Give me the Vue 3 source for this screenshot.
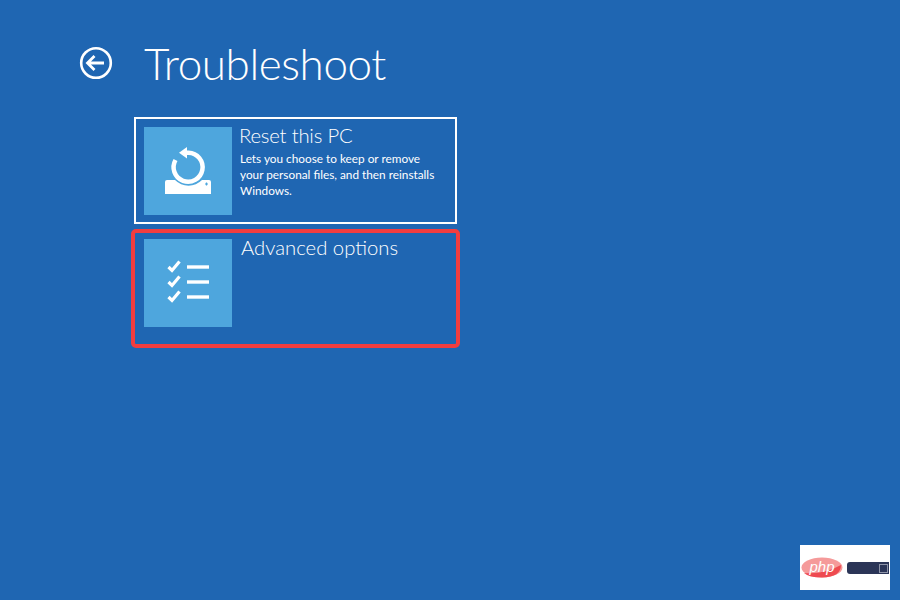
<template>
  <div class="screen">
    <header class="head">
      <svg class="back" width="34" height="34" viewBox="0 0 34 34" fill="none" stroke="#fff">
        <circle cx="17" cy="17" r="14.800" stroke-width="2.600" />
        <path d="M8.500 17H25M15.500 10 8.500 17l7 7" stroke-width="2.800" />
      </svg>
      <h1 class="title">Troubleshoot</h1>
    </header>

    <div class="cards">
      <section class="card selected">
        <div class="tile">
          <svg width="88" height="88" viewBox="0 0 88 88">
            <path d="M21 55Q21 53 23 53H31A19 19 0 0 0 58 53H65Q67 53 67 55V67H21Z" fill="#fff" />
            <path d="M61 57h3M62.500 55.500v3" stroke="#4ea6dd" stroke-width="1.200" />
            <path d="M40 25.700H44.500A14.500 14.500 0 1 1 31.500 33" fill="none" stroke="#fff" stroke-width="4.500" />
            <path d="M43 20V31.500L35 25.700Z" fill="#fff" />
          </svg>
        </div>
        <div class="text">
          <h2 class="name first">Reset this PC</h2>
          <p class="desc">Lets you choose to keep or remove<br />your personal files, and then reinstalls<br />Windows.</p>
        </div>
      </section>

      <section class="card flagged">
        <div class="tile">
          <svg width="88" height="88" viewBox="0 0 88 88" fill="none" stroke="#fff">
            <g v-for="y in rows" :key="y">
              <path :d="`M24.500 ${y}l3.500 3.500 7.500-9`" stroke-width="3.200" />
              <path :d="`M43 ${y}H65`" stroke-width="3.400" />
            </g>
          </svg>
        </div>
        <div class="text">
          <h2 class="name second">Advanced options</h2>
        </div>
      </section>
    </div>

    <div class="badge">
      <svg class="logo" width="42" height="21" viewBox="0 0 42 21">
        <ellipse cx="21" cy="10.500" rx="20.500" ry="10" fill="#f59a9a" />
        <path d="M3 16Q22 18 40 8Q40 20 21 20.500Q8 20.500 3 16Z" fill="#ee4a50" />
        <text x="21" y="15" class="php">php</text>
      </svg>
      <div class="ink">
        <span class="mark"></span>
      </div>
    </div>
  </div>
</template>

<script setup>
const rows = [28, 43, 58]
</script>

<style>
html, body { margin: 0; padding: 0; }
</style>

<style scoped>
.screen {
  position: relative;
  box-sizing: border-box;
  width: 900px;
  height: 600px;
  overflow: hidden;
  background: #1f66b2;
  color: #fff;
  font-family: "Lato", "Open Sans", sans-serif;
  padding: 35px 0 0 79px;
}
.head {
  display: flex;
  align-items: center;
  gap: 31px;
  height: 56px;
  margin-bottom: 26px;
}
.back { flex: none; }
.title {
  margin: 0;
  font-size: 44px;
  line-height: 56px;
  font-weight: 300;
  letter-spacing: -0.400px;
}
.cards {
  display: flex;
  flex-direction: column;
  gap: 5px;
  margin-left: 52px;
  align-items: flex-start;
}
.card {
  display: flex;
  box-sizing: border-box;
}
.selected {
  width: 323px;
  height: 107px;
  margin-left: 3px;
  border: 2px solid #fff;
  padding: 8px;
}
.flagged {
  width: 329px;
  height: 119px;
  border: 4px solid #f23d3f;
  border-radius: 5px;
  padding: 6px 9px;
}
.tile {
  flex: none;
  width: 88px;
  height: 88px;
  background: #4ea6dd;
}
.tile svg { display: block; }
.text { margin-left: 8px; }
.name {
  margin: -4px 0 0;
  font-size: 20.300px;
  line-height: 24px;
  font-weight: 300;
  white-space: nowrap;
}
.first { margin-left: -1px; letter-spacing: -0.200px; }
.second { margin-left: 1px; }
.desc {
  margin: 4px 0 0;
  font-size: 11.800px;
  line-height: 16px;
  font-weight: 400;
  white-space: nowrap;
}
.badge {
  position: absolute;
  left: 800px;
  top: 545px;
  width: 90px;
  height: 45px;
  background: #fff;
  display: flex;
  align-items: center;
  gap: 4px;
  box-sizing: border-box;
  padding-left: 1px;
}
.logo { flex: none; }
.php {
  font-family: "Liberation Sans", sans-serif;
  font-size: 15px;
  font-style: italic;
  fill: #fff;
  text-anchor: middle;
}
.ink {
  position: relative;
  flex: none;
  width: 42px;
  height: 12px;
  border-radius: 3px 0 0 3px;
  background: #2b3557;
}
.mark {
  position: absolute;
  right: 1px;
  top: 2px;
  width: 7px;
  height: 7px;
  border: 1px solid #8e94a8;
}
</style>
